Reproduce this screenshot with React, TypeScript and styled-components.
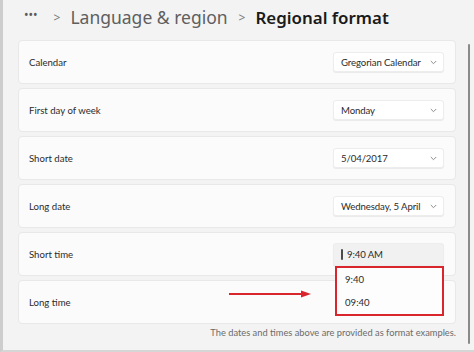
import styled, { createGlobalStyle } from "styled-components";

const GlobalStyle = createGlobalStyle`
  html, body {
    margin: 0;
    padding: 0;
    background: #f3f3f3;
  }
  body {
    font-family: Lato, "Noto Sans", sans-serif;
  }
`;

const Frame = styled.div`
  width: 474px;
  height: 352px;
  box-sizing: border-box;
  display: flex;
  background: #f3f3f3;
  border-left: 3px solid #cdcdcd;
  border-bottom: 2px solid #d6d6d6;
  overflow: hidden;
`;

const Main = styled.div`
  flex: 1;
  padding: 0 0 0 15px;
  display: flex;
  flex-direction: column;
`;

const Header = styled.div`
  height: 40px;
  box-sizing: border-box;
  display: flex;
  align-items: center;
  padding: 0 0 6px 6px;
  font-family: "Noto Sans", sans-serif;
  font-size: 17.5px;
  color: #5c5c5c;
  white-space: nowrap;
`;

const Dots = styled.span`
  font-size: 12px;
  color: #5a5a5a;
  margin-right: 16px;
  position: relative;
  top: -3px;
`;

const Sep = styled.span`
  font-size: 12px;
  color: #777;
  margin: 0 10px 0 0;
`;

const Crumb = styled.span<{ $current?: boolean }>`
  color: ${(p) => (p.$current ? "#1a1a1a" : "#5f5f5f")};
  font-weight: ${(p) => (p.$current ? 600 : 400)};
  font-size: ${(p) => (p.$current ? "16.9px" : "17.5px")};
  margin-right: ${(p) => (p.$current ? 0 : 11)}px;
`;

const List = styled.div`
  display: flex;
  flex-direction: column;
  gap: 4px;
`;

const Card = styled.div`
  position: relative;
  height: 44px;
  box-sizing: border-box;
  display: flex;
  align-items: center;
  justify-content: space-between;
  padding: 0 11px 0 10px;
  background: #fbfbfb;
  border: 1px solid #e8e8e8;
  border-radius: 4px;
`;

const Label = styled.span`
  font-size: 9.6px;
  color: #2b2b2b;
`;

const Select = styled.div<{ $open?: boolean }>`
  width: 111px;
  height: ${(p) => (p.$open ? "23px" : "20px")};
  box-sizing: border-box;
  display: flex;
  align-items: center;
  justify-content: space-between;
  padding: 0 6px 0 7px;
  background: ${(p) => (p.$open ? "#f1f1f1" : "#ffffff")};
  border: 1px solid #ededed;
  border-radius: 3px;
  box-shadow: 0 1px 1px rgba(0, 0, 0, 0.07);
  font-size: 9.6px;
  letter-spacing: -0.1px;
  color: #2b2b2b;
  white-space: nowrap;

  svg {
    flex-shrink: 0;
  }
`;

const Selected = styled.span`
  display: flex;
  align-items: center;
  gap: 4px;
  &::before {
    content: "";
    width: 2px;
    height: 11px;
    background: #4a4a4a;
    border-radius: 1px;
  }
`;

const Popup = styled.div`
  position: absolute;
  right: 11px;
  top: 33px;
  width: 109px;
  height: 50px;
  box-sizing: border-box;
  border: 2px solid #d9262c;
  background: #fdfdfd;
  display: flex;
  flex-direction: column;
  justify-content: space-around;
  padding: 0 8px;
  font-size: 9.6px;
  color: #2b2b2b;
  z-index: 2;
`;

const Arrow = styled.svg`
  position: absolute;
  left: 210px;
  top: 8px;
`;

const Note = styled.div`
  text-align: right;
  font-size: 9.3px;
  color: #6b6b6b;
  margin-top: 3px;
  white-space: nowrap;
`;

const ScrollCol = styled.div`
  width: 18px;
  display: flex;
  justify-content: flex-end;
  padding: 44px 4px 6px 0;
  box-sizing: border-box;
`;

const Thumb = styled.div`
  width: 2px;
  height: 100%;
  background: #8a8a8a;
  border-radius: 1px;
`;

const Chevron = () => (
  <svg width="7" height="5" viewBox="0 0 7 5">
    <polyline points="0.8,1 3.5,3.7 6.2,1" fill="none" stroke="#8a8a8a" strokeWidth="1" />
  </svg>
);

const rows = [
  { label: "Calendar", value: "Gregorian Calendar" },
  { label: "First day of week", value: "Monday" },
  { label: "Short date", value: "5/04/2017" },
  { label: "Long date", value: "Wednesday, 5 April" },
];

export default function App() {
  return (
    <>
      <GlobalStyle />
      <Frame>
        <Main>
          <Header>
            <Dots>•••</Dots>
            <Sep>&gt;</Sep>
            <Crumb>Language &amp; region</Crumb>
            <Sep>&gt;</Sep>
            <Crumb $current>Regional format</Crumb>
          </Header>
          <List>
            {rows.map((r) => (
              <Card key={r.label}>
                <Label>{r.label}</Label>
                <Select>
                  <span>{r.value}</span>
                  <Chevron />
                </Select>
              </Card>
            ))}
            <Card>
              <Label>Short time</Label>
              <Select $open>
                <Selected>9:40 AM</Selected>
              </Select>
              <Popup>
                <span>9:40</span>
                <span>09:40</span>
              </Popup>
            </Card>
            <Card>
              <Label>Long time</Label>
              <Arrow width="84" height="10" viewBox="0 0 84 10">
                <line x1="0" y1="5" x2="74" y2="5" stroke="#d9262c" strokeWidth="2" />
                <polygon points="72,1.5 82,5 72,8.5" fill="#d9262c" />
              </Arrow>
            </Card>
          </List>
          <Note>The dates and times above are provided as format examples.</Note>
        </Main>
        <ScrollCol>
          <Thumb />
        </ScrollCol>
      </Frame>
    </>
  );
}
